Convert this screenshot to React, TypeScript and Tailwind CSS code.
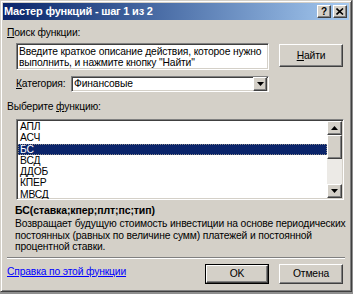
import React from "react";

const raised =
  "border border-t-white border-l-white border-r-[#404040] border-b-[#404040] shadow-[inset_-1px_-1px_#808080] bg-[#D4D0C8]";
const sunken =
  "border border-t-[#808080] border-l-[#808080] border-r-white border-b-white shadow-[inset_1px_1px_#404040,inset_-1px_-1px_#D4D0C8]";

const items = ["АПЛ", "АСЧ", "БС", "ВСД", "ДДОБ", "КПЕР", "МВСД"];

export default function App() {
  return (
    <div className="w-[353px] h-[294px] bg-[#8f8f8f] font-['Liberation_Sans',Arial,sans-serif] text-[10.3px] tracking-[-0.15px] text-black overflow-hidden whitespace-nowrap">
      <div className="w-[352px] h-[292px] bg-[#D4D0C8] border border-t-[#D4D0C8] border-l-[#D4D0C8] border-r-[#404040] border-b-[#404040] shadow-[inset_1px_1px_white,inset_-1px_-1px_#808080] p-[2px] flex flex-col">
        {/* Title bar */}
        <div className="h-[17px] flex items-center bg-gradient-to-r from-[#0A246A] to-[#A6CAF0] pl-[1px] pr-[2px] shrink-0">
          <span className="text-white font-bold text-[11px] leading-[17px] tracking-[-0.2px]">
            Мастер функций - шаг 1 из 2
          </span>
          <div className="ml-auto flex gap-[2px]">
            <div className={`${raised} w-[14px] h-[13px] flex items-center justify-center`}>
              <span className="font-bold text-[10px] leading-none tracking-[0px]">?</span>
            </div>
            <div className={`${raised} w-[14px] h-[13px] flex items-center justify-center`}>
              <svg width="8" height="7" viewBox="0 0 8 7">
                <path d="M0.5 0.5 L7 6.5 M7 0.5 L0.5 6.5" stroke="black" strokeWidth="1.6" />
              </svg>
            </div>
          </div>
        </div>

        {/* Content */}
        <div className="flex flex-col pl-[4px] pr-[4px]">
          <div className="mt-[6px] h-[13px] leading-[13px]">
            <u>П</u>оиск функции:
          </div>

          <div className="mt-[4px] flex">
            <div className={`${sunken} bg-white ml-[9px] w-[253px] h-[27px] pl-[2px] pt-[3px] leading-[10.5px] overflow-hidden`}>
              Введите краткое описание действия, которое нужно
              <br />
              выполнить, и нажмите кнопку "Найти"
            </div>
            <div className={`${raised} ml-[10px] mt-[1px] w-[64px] h-[23px] flex items-center justify-center`}>
              <span>
                <u>Н</u>айти
              </span>
            </div>
          </div>

          <div className="mt-[6px] flex items-center h-[16px]">
            <div className="ml-[9px] w-[55px]">
              <u>К</u>атегория:
            </div>
            <div className={`${sunken} bg-white w-[198px] h-[16px] flex items-center`}>
              <span className="pl-[2px] flex-1">Финансовые</span>
              <div className={`${raised} w-[14px] h-[14px] mr-[1px] flex items-center justify-center`}>
                <svg width="7" height="4" viewBox="0 0 7 4">
                  <path d="M0 0 H7 L3.5 4 Z" fill="black" />
                </svg>
              </div>
            </div>
          </div>

          <div className="mt-[8px] h-[13px] leading-[13px]">
            Выберите <u>ф</u>ункцию:
          </div>

          <div className={`${sunken} bg-white mt-[6px] ml-[9px] w-[328px] h-[81px] flex overflow-hidden shrink-0`}>
            <div className="flex-1 flex flex-col pt-[1px] pl-[1px] overflow-hidden">
              {items.map((it) => (
                <div
                  key={it}
                  className={
                    it === "БС"
                      ? "h-[11.3px] leading-[11.3px] shrink-0 bg-[#0A246A] text-white pl-[2px] outline outline-1 outline-dotted outline-[#8a8a8a] -outline-offset-1"
                      : "h-[11.3px] leading-[11.3px] shrink-0 pl-[2px]"
                  }
                >
                  {it}
                </div>
              ))}
            </div>
            <div className="w-[15px] flex flex-col bg-[#ECEAE6] mt-[1px] mb-[1px] mr-[1px]">
              <div className={`${raised} h-[14px] flex items-center justify-center shrink-0`}>
                <svg width="7" height="4" viewBox="0 0 7 4">
                  <path d="M0 4 H7 L3.5 0 Z" fill="black" />
                </svg>
              </div>
              <div className={`${raised} h-[24px] shrink-0`} />
              <div className="flex-1" />
              <div className={`${raised} h-[14px] flex items-center justify-center shrink-0`}>
                <svg width="7" height="4" viewBox="0 0 7 4">
                  <path d="M0 0 H7 L3.5 4 Z" fill="black" />
                </svg>
              </div>
            </div>
          </div>

          <div className="mt-[4px] ml-[8px] h-[13px] leading-[13px] font-bold text-[10.5px] tracking-[-0.1px]">
            БС(ставка;кпер;плт;пс;тип)
          </div>
          <div className="mt-[1px] ml-[8px] leading-[11.5px]">
            Возвращает будущую стоимость инвестиции на основе периодических
            <br />
            постоянных (равных по величине сумм) платежей и постоянной
            <br />
            процентной ставки.
          </div>

          <div className="mt-[4px] h-[2px] border-t border-t-[#808080] border-b border-b-white w-[338px] shrink-0" />

          <div className="flex items-start">
            <a className="text-[#0000FF] underline cursor-pointer mt-[6px] h-[13px] leading-[13px]">Справка по этой функции</a>
            <div className="ml-auto flex gap-[10px] mr-[2px] mt-[5px]">
              <div className="w-[64px] h-[20px] border border-black">
                <div className={`${raised} w-full h-full flex items-center justify-center`}>OK</div>
              </div>
              <div className={`${raised} w-[64px] h-[20px] flex items-center justify-center`}>Отмена</div>
            </div>
          </div>
        </div>
      </div>
    </div>
  );
}
